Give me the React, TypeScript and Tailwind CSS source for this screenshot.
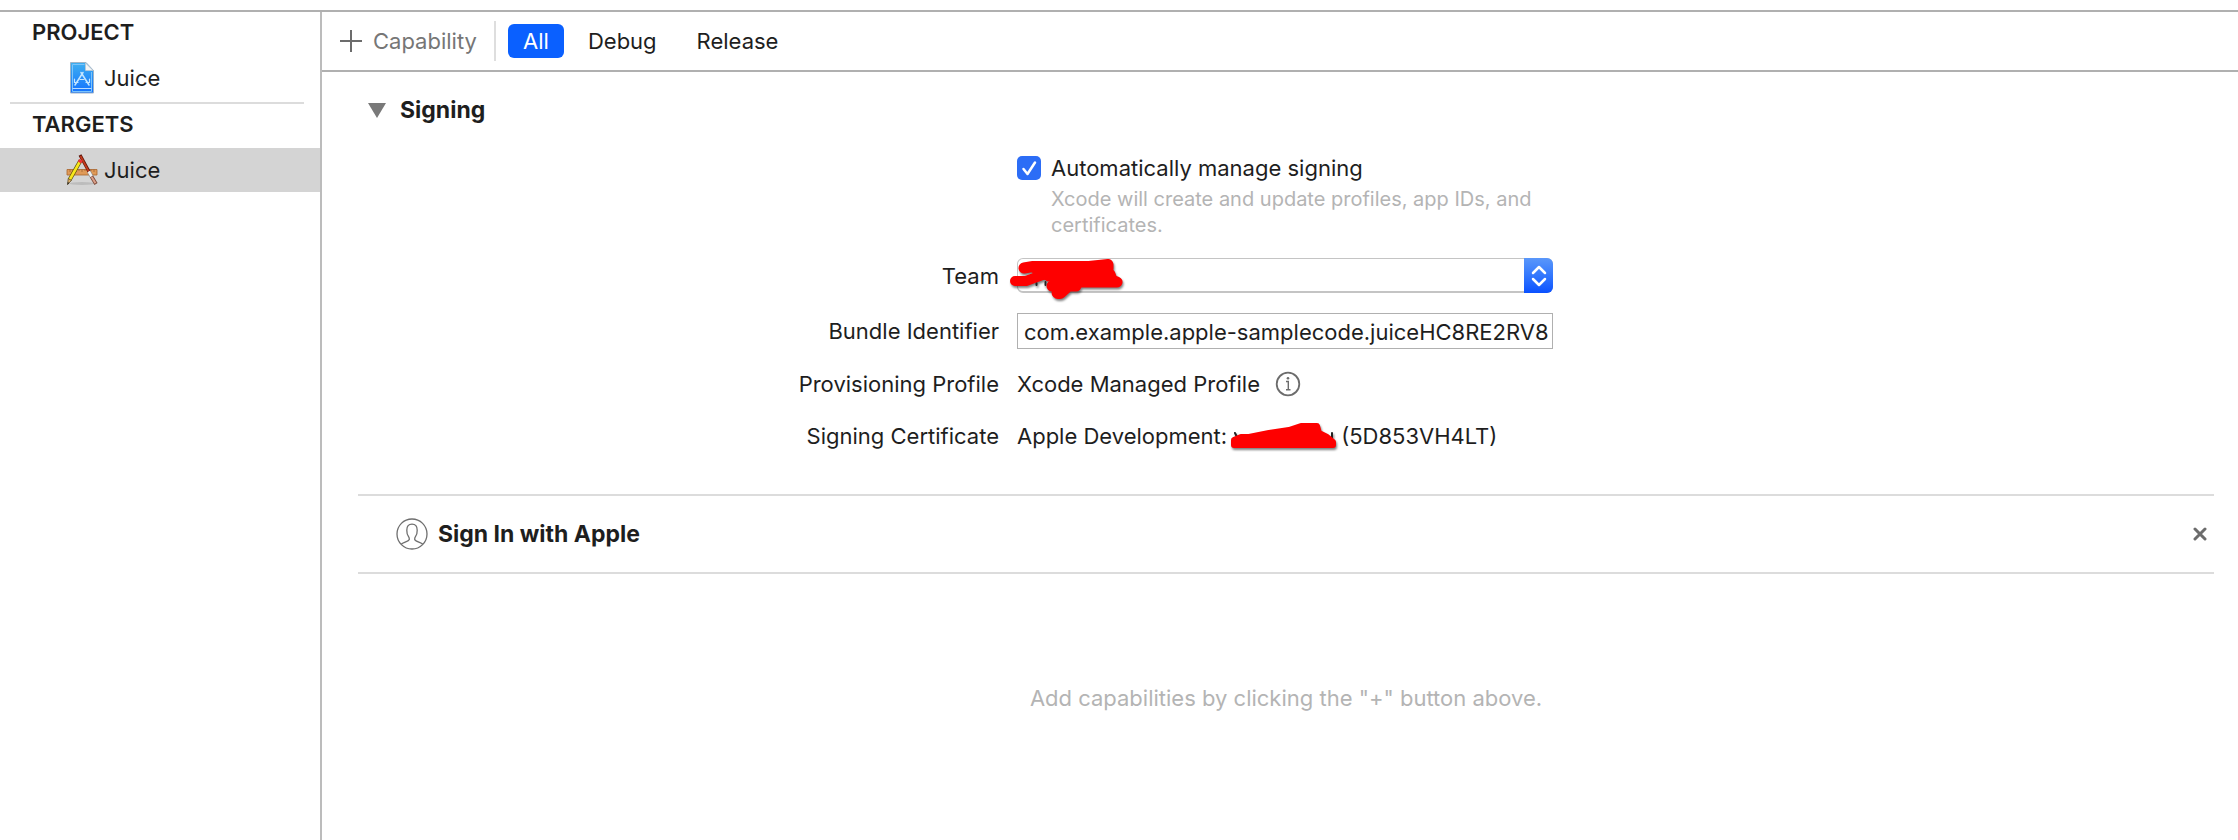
import { ReactNode } from "react";

function ProjectIcon() {
  return (
    <svg width="24" height="32" viewBox="0 0 24 32" aria-hidden="true">
      <defs>
        <linearGradient id="doc" x1="0" y1="0" x2="0" y2="1">
          <stop offset="0" stopColor="#3fb0f0" />
          <stop offset="1" stopColor="#1271ff" />
        </linearGradient>
      </defs>
      <path d="M.5 .5H16L23.500 8.500V31H.5Z" fill="url(#doc)" stroke="#9fb4c8" strokeWidth="1" />
      <path d="M14.500 2.500H2.500V29.500H21.500V10" fill="none" stroke="#7cc4fb" strokeWidth="1" />
      <path d="M2.500 26.500H21.500" stroke="#b8dcff" strokeWidth="1" />
      <path d="M15.500 1V8.500H23Z" fill="#f4f4f4" stroke="#c8c8c8" strokeWidth=".6" />
      <g fill="none" stroke="#c4e6ff" strokeWidth="1.500" strokeLinecap="round">
        <path d="M13 10.500L5 23M11 10.500L19 23" />
        <path d="M4.500 17V20.500H8M10 17.500H14M16 20.500H19.500V17" strokeWidth="1.200" />
      </g>
    </svg>
  );
}

function TargetIcon() {
  return (
    <svg width="32" height="32" viewBox="0 0 32 32" aria-hidden="true">
      <ellipse cx="16" cy="29.500" rx="13" ry="1.500" fill="#bcbcbc" />
      <path d="M1 15.500H31V21H1Z" fill="#df9a58" stroke="#a9642c" strokeWidth=".8" />
      <path d="M4 15.500v2.500M7 15.500v1.500M10 15.500v2.500M13 15.500v1.500M16 15.500v2.500M19 15.500v1.500M22 15.500v2.500M25 15.500v1.500M28 15.500v2.500" stroke="#9a5d2d" strokeWidth=".7" />
      <path d="M14 1L23.500 18.500" stroke="#5c150b" strokeWidth="3.200" />
      <path d="M14.500 2L23 18" stroke="#c43a1c" strokeWidth="1.600" />
      <path d="M22.800 17.500L25.800 22.800" stroke="#8a8a8a" strokeWidth="3.800" />
      <path d="M22.800 17.500L25.800 22.800" stroke="#f0f0f0" strokeWidth="2.600" />
      <path d="M25.500 22.500L30 30" stroke="#7b4838" strokeWidth="3.600" />
      <path d="M25.700 23L29.500 29.300" stroke="#dba089" strokeWidth="2" />
      <path d="M14.500 6.500L3.800 25.500" stroke="#5b5008" strokeWidth="4" />
      <path d="M14.500 6.500L3.800 25.500" stroke="#f8e71c" strokeWidth="2.600" />
      <path d="M15 5.800L13.500 8.500" stroke="#ee3338" strokeWidth="3.800" />
      <path d="M2.200 24.500L5.400 26.400L1.600 30.500Z" fill="#e0b070" stroke="#4c3c10" strokeWidth=".7" />
      <path d="M1.700 28L3.200 29L1.400 31Z" fill="#222" />
    </svg>
  );
}

function PersonIcon() {
  return (
    <svg width="32" height="32" viewBox="0 0 32 32" fill="none" stroke="#6e6e6e" strokeWidth="1.300" aria-hidden="true">
      <circle cx="16" cy="16" r="15" />
      <path d="M5.200 26.200C7 24.300 12.700 23.500 13.300 21.500C13.500 20.300 13.200 19.500 12.300 18.200C11.200 16.700 10.800 14.600 10.800 12.200C10.800 8.300 12.600 6.200 16 6.200C19.400 6.200 21.200 8.300 21.200 12.200C21.200 14.600 20.800 16.700 19.700 18.200C18.800 19.500 18.500 20.300 18.700 21.500C19.300 23.500 25 24.300 26.800 26.200" />
    </svg>
  );
}

function TeamScribble() {
  return (
    <svg className="absolute -left-2 -top-1 drop-shadow-[1px_2px_1px_rgba(0,0,0,0.5)]" width="116" height="48" viewBox="0 0 116 48" fill="none" stroke="#fe0000" strokeLinecap="round" strokeLinejoin="round" aria-hidden="true">
      <path d="M27.500 29V31M36.500 28V31" stroke="#222" strokeWidth="2" />
      <path d="M15 14L24 12.500H80L99 10.500V15L80 18L34 20.500L28 16" strokeWidth="11" />
      <path d="M6 27H17L32 21.500" strokeWidth="10" />
      <path d="M40 22L101 20.500L103 26L108 28L48 28" strokeWidth="11" />
      <path d="M43 32H67" strokeWidth="11" />
      <path d="M49 38.500H51L56 34" strokeWidth="13" />
    </svg>
  );
}

function NameScribble() {
  return (
    <svg className="drop-shadow-[1px_2px_1px_rgba(0,0,0,0.5)]" width="108" height="32" viewBox="0 0 108 32" fill="#fe0000" stroke="#fe0000" strokeWidth="6" strokeLinecap="round" strokeLinejoin="round" aria-hidden="true">
      <path d="M6 13L8 17M103 13V19" stroke="#222" strokeWidth="2" />
      <path d="M5 25V20L12 17H20L40 13L60 10L72 6H88L90 13L98 17L104 22V25Z" />
    </svg>
  );
}

function Row({ label, htmlFor, className, children }: { label: string; htmlFor?: string; className: string; children: ReactNode }) {
  return (
    <div className={`grid grid-cols-[1fr_536px_1fr] items-center pr-[2px] ${className}`}>
      {htmlFor ? (
        <label htmlFor={htmlFor} className="pr-[18px] text-right">{label}</label>
      ) : (
        <span className="pr-[18px] text-right">{label}</span>
      )}
      {children}
    </div>
  );
}

export default function App() {
  return (
    <div className="min-h-screen bg-white pt-[10px] font-['Inter',sans-serif] text-[22px] leading-[28px] text-[#1e1e1e]">
      <div className="flex min-h-[calc(100vh-10px)] border-t-2 border-[#b0b0b0]">
        <nav className="w-[322px] shrink-0 border-r-2 border-[#bcbcbc]">
          <h2 className="mt-[6px] pl-8 font-semibold">PROJECT</h2>
          <a href="#project" className="mt-[10px] flex h-11 items-center gap-[10px] pl-[70px]">
            <ProjectIcon />
            <span>Juice</span>
          </a>
          <hr className="ml-[10px] mr-4 mt-[2px] border-t-2 border-[#dcdcdc]" />
          <h2 className="mt-[6px] pl-8 font-semibold">TARGETS</h2>
          <a href="#target" aria-current="page" className="mt-[10px] flex h-11 items-center gap-[6px] bg-[#d4d4d4] pl-[66px]">
            <TargetIcon />
            <span>Juice</span>
          </a>
        </nav>

        <main className="min-w-0 flex-1">
          <div className="flex h-[60px] items-center border-b-2 border-[#b0b0b0] pl-[18px]">
            <button type="button" className="flex items-center gap-[11px] text-[#767676]">
              <svg width="22" height="22" viewBox="0 0 22 22" stroke="#6c6c6c" strokeWidth="2" aria-hidden="true">
                <path d="M11 0V22M0 11H22" />
              </svg>
              Capability
            </button>
            <div className="ml-[17px] h-10 w-[2px] bg-[#dedede]" />
            <div className="ml-3 flex items-center">
              <button type="button" className="h-[34px] w-14 rounded-[6px] bg-[#0a60ff] text-white">All</button>
              <button type="button" className="ml-6">Debug</button>
              <button type="button" className="ml-10">Release</button>
            </div>
          </div>

          <div className="pl-9 pr-6">
            <section>
              <h3 className="pt-6">
                <button type="button" aria-expanded="true" className="flex items-center gap-[14px] pl-[10px] text-[23px] font-bold">
                  <svg width="18" height="15" viewBox="0 0 18 15" fill="#797979" aria-hidden="true">
                    <path d="M0 0H18L9 15Z" />
                  </svg>
                  Signing
                </button>
              </h3>

              <div className="mt-[30px] grid grid-cols-[1fr_536px_1fr] pr-[2px]">
                <div className="col-start-2">
                  <label className="flex items-center gap-[10px]">
                    <span className="relative flex">
                      <input type="checkbox" defaultChecked className="size-6 appearance-none rounded-[5px] bg-[#2c6df6]" />
                      <svg className="pointer-events-none absolute inset-0" width="24" height="24" viewBox="0 0 24 24" fill="none" stroke="white" strokeWidth="2.500" strokeLinecap="round" strokeLinejoin="round" aria-hidden="true">
                        <path d="M6.500 13L10.500 18L18 6.500" />
                      </svg>
                    </span>
                    Automatically manage signing
                  </label>
                  <p className="mt-1 pl-[34px] text-[20px] leading-[26px] text-[#b4b4b4]">
                    Xcode will create and update profiles, app IDs, and certificates.
                  </p>
                </div>
              </div>

              <Row label="Team" htmlFor="team" className="mt-5">
                <div className="relative h-[35px]">
                  <select id="team" className="h-full w-full appearance-none rounded-[6px] border border-b-2 border-[#c4c4c4] bg-white">
                    <option aria-label="Team" />
                  </select>
                  <span className="pointer-events-none absolute inset-y-0 right-0 flex w-[29px] items-center justify-center rounded-r-[6px] bg-linear-to-b from-[#5a97fa] to-[#0a50ff]">
                    <svg width="16" height="22" viewBox="0 0 16 22" fill="none" stroke="white" strokeWidth="2.500" strokeLinecap="round" strokeLinejoin="round" aria-hidden="true">
                      <path d="M2 8L8 2L14 8M2 14L8 20L14 14" />
                    </svg>
                  </span>
                  <TeamScribble />
                </div>
              </Row>

              <Row label="Bundle Identifier" htmlFor="bundle" className="mt-5">
                <input id="bundle" type="text" defaultValue="com.example.apple-samplecode.juiceHC8RE2RV8" className="h-9 w-full border border-[#b0b0b0] bg-white pl-[6px] pt-[2px]" />
              </Row>

              <Row label="Provisioning Profile" className="mt-[21px]">
                <span className="flex items-center gap-[15px]">
                  Xcode Managed Profile
                  <button type="button" aria-label="Profile information">
                    <svg width="26" height="26" viewBox="0 0 26 26" fill="none" stroke="#6c6c6c" strokeWidth="1.800" aria-hidden="true">
                      <circle cx="13" cy="13" r="11.300" />
                      <path d="M11 10.500H13.300V18.500M11 18.700H15.500" strokeWidth="1.400" />
                      <circle cx="13" cy="7.200" r="1.300" fill="#6c6c6c" stroke="none" />
                    </svg>
                  </button>
                </span>
              </Row>

              <Row label="Signing Certificate" className="mt-6">
                <span className="flex items-center">
                  Apple Development:
                  <span className="-my-1 ml-[2px] mr-1"><NameScribble /></span>
                  (5D853VH4LT)
                </span>
              </Row>
            </section>

            <section className="mt-11 flex h-20 items-center border-y-2 border-[#dcdcdc] pl-[38px] pr-[7px]">
              <PersonIcon />
              <h3 className="ml-[10px] text-[23px] font-bold">Sign In with Apple</h3>
              <button type="button" aria-label="Remove capability" className="ml-auto">
                <svg width="14" height="14" viewBox="0 0 14 14" stroke="#6c6c6c" strokeWidth="3" strokeLinecap="round" aria-hidden="true">
                  <path d="M2 2L12 12M12 2L2 12" />
                </svg>
              </button>
            </section>

            <p className="mt-[110px] text-center text-[#b4b4b4]">Add capabilities by clicking the "+" button above.</p>
          </div>
        </main>
      </div>
    </div>
  );
}
